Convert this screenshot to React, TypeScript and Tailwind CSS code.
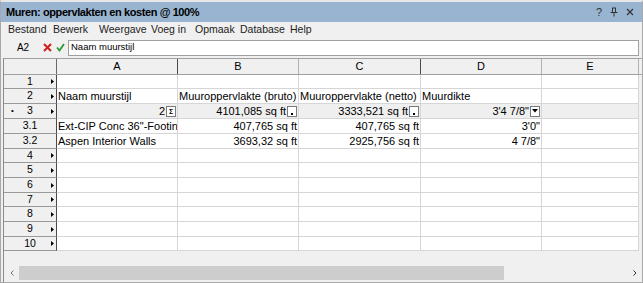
import React from 'react';

type Cell = { text?: string; align?: 'left' | 'right'; box?: 'sum' | 'dot' | 'drop' };
type Row = { label: string; h: number; arrow?: boolean; mark?: boolean; sub?: boolean; cells: Cell[] };

const cols = [
    { key: 'A', w: 121 },
    { key: 'B', w: 121 },
    { key: 'C', w: 122 },
    { key: 'D', w: 121 },
    { key: 'E', w: 97 },
];

const rows: Row[] = [
    { label: '1', h: 14, arrow: true, cells: [] },
    {
        label: '2', h: 15, arrow: true,
        cells: [
            { text: 'Naam muurstijl' },
            { text: 'Muuroppervlakte (bruto)' },
            { text: 'Muuroppervlakte (netto)' },
            { text: 'Muurdikte' },
        ],
    },
    {
        label: '3', h: 15, arrow: true, mark: true, sub: true,
        cells: [
            { text: '2', align: 'right', box: 'sum' },
            { text: '4101,085 sq ft', align: 'right', box: 'dot' },
            { text: '3333,521 sq ft', align: 'right', box: 'dot' },
            { text: "3'4 7/8\"", align: 'right', box: 'drop' },
        ],
    },
    {
        label: '3.1', h: 15,
        cells: [
            { text: 'Ext-CIP Conc 36"-Footin' },
            { text: '407,765 sq ft', align: 'right' },
            { text: '407,765 sq ft', align: 'right' },
            { text: "3'0\"", align: 'right' },
        ],
    },
    {
        label: '3.2', h: 15,
        cells: [
            { text: 'Aspen Interior Walls' },
            { text: '3693,32 sq ft', align: 'right' },
            { text: '2925,756 sq ft', align: 'right' },
            { text: '4 7/8"', align: 'right' },
        ],
    },
    { label: '4', h: 14, arrow: true, cells: [] },
    { label: '5', h: 15, arrow: true, cells: [] },
    { label: '6', h: 15, arrow: true, cells: [] },
    { label: '7', h: 14, arrow: true, cells: [] },
    { label: '8', h: 15, arrow: true, cells: [] },
    { label: '9', h: 15, arrow: true, cells: [] },
    { label: '10', h: 14, arrow: true, cells: [] },
];

// menu item + the slot it takes in the bar
const menu: [string, string][] = [
    ['Bestand', 'w-[45px]'],
    ['Bewerk', 'w-[46px]'],
    ['Weergave', 'w-[52px]'],
    ['Voeg in', 'w-[44px]'],
    ['Opmaak', 'w-[45px]'],
    ['Database', 'w-[50px]'],
    ['Help', 'w-[30px]'],
];

const CellBox: React.FC<{ kind: 'sum' | 'dot' | 'drop' }> = ({ kind }) => (
    <span className="ml-[1px] w-[10px] h-[11px] flex-shrink-0 bg-white border border-[#7a7a7a] flex items-center justify-center">
        {kind === 'sum' && <span className="text-[7px] leading-none font-bold">Σ</span>}
        {kind === 'dot' && <span className="mt-[5px] w-[2px] h-[2px] bg-black" />}
        {kind === 'drop' && (
            <svg width="6" height="4" viewBox="0 0 6 4"><path d="M0 0h6L3 3.5z" fill="#000" /></svg>
        )}
    </span>
);

export default function App() {
    return (
        <div
            className="w-[643px] h-[283px] overflow-hidden bg-[#f0f0f0] border border-[#a8a8a8] border-t-[2px] border-t-[#e6e6e6] flex flex-col text-black"
            style={{ fontFamily: '"Liberation Sans", Arial, sans-serif' }}
        >
            {/* title */}
            <div className="h-[20px] flex-shrink-0 bg-[#99b4d1] flex items-center justify-between pl-[5px] pr-[8px]">
                <span className="text-[11px] font-bold tracking-[-0.4px]">Muren: oppervlakten en kosten @ 100%</span>
                <div className="flex items-center gap-[8px] text-[11px] text-[#333]">
                    <span>?</span>
                    <svg width="8" height="10" viewBox="0 0 8 10"><path d="M2 1h4M2.5 1v4M5.5 1v4M0.5 5.5h7M4 5.5v4" stroke="#333" strokeWidth="1" fill="none" /></svg>
                    <svg width="8" height="8" viewBox="0 0 8 8"><path d="M1 1l6 6M7 1L1 7" stroke="#333" strokeWidth="1.2" /></svg>
                </div>
            </div>

            {/* menu */}
            <div className="h-[16px] flex-shrink-0 flex items-center text-[10.5px] pl-[7px]">
                {menu.map(([m, w]) => (
                    <span key={m} className={`${w} flex-shrink-0 whitespace-nowrap text-[#222]`}>{m}</span>
                ))}
            </div>

            {/* formula bar */}
            <div className="h-[19px] flex-shrink-0 flex items-center pr-[3px]">
                <span className="w-[41px] text-center text-[10px] pl-[3px]">A2</span>
                <svg className="ml-[1px]" width="9" height="9" viewBox="0 0 9 9"><path d="M1 1l7 7M8 1L1 8" stroke="#d0201b" strokeWidth="2" /></svg>
                <svg className="ml-[4px]" width="9" height="9" viewBox="0 0 9 9"><path d="M1 4.5l2.5 3L8 1" stroke="#2f9a2f" strokeWidth="1.8" fill="none" /></svg>
                <div className="ml-[3px] flex-1 h-[16px] bg-white border border-[#a0a0a0] flex items-center pl-[2px] text-[9.5px]">
                    Naam muurstijl
                </div>
            </div>

            {/* grid */}
            <div className="mt-[1px] ml-[2px] flex-1 flex flex-col border-l border-[#8a8a8a] min-h-0">
                <div className="flex h-[17px] border-t border-b border-[#a0a0a0] bg-[#f0f0f0] text-[11px]">
                    <div className="w-[53px] flex-shrink-0 border-r border-[#6a6a6a]" />
                    {cols.map((c, i) => (
                        <div
                            key={c.key}
                            className={`flex-shrink-0 flex items-center justify-center border-r ${i === 0 || i === 2 ? 'border-[#4a4a4a]' : 'border-[#b0b0b0]'}`}
                            style={{ width: c.w }}
                        >
                            {c.key}
                        </div>
                    ))}
                </div>
                {rows.map((r) => (
                    <div key={r.label} className="flex text-[10.5px]" style={{ height: r.h }}>
                        <div className="w-[53px] flex-shrink-0 relative flex items-center justify-center bg-[#f0f0f0] border-b border-r border-[#9a9a9a] border-r-[#4a4a4a]">
                            {r.mark && <span className="absolute left-[7px] text-[8px] leading-none">•</span>}
                            <span className="w-[44px] text-center">{r.label}</span>
                            {r.arrow && (
                                <svg className="absolute right-[2px]" width="3" height="5" viewBox="0 0 3 5"><path d="M0 0l3 2.5L0 5z" fill="#000" /></svg>
                            )}
                        </div>
                        {cols.map((c, i) => {
                            const cell = r.cells[i] || {};
                            return (
                                <div
                                    key={c.key}
                                    className={`flex-shrink-0 flex items-center overflow-hidden whitespace-nowrap border-b border-r border-[#d6d6d6] ${r.sub ? 'bg-[#efefef]' : 'bg-white'} ${cell.align === 'right' ? 'justify-end pr-[1px]' : 'pl-[1px]'}`}
                                    style={{ width: c.w }}
                                >
                                    {cell.text && <span className="text-[11px]">{cell.text}</span>}
                                    {cell.box && <CellBox kind={cell.box} />}
                                </div>
                            );
                        })}
                    </div>
                ))}
                <div className="flex-1" />
                {/* horizontal scrollbar */}
                <div className="h-[14px] flex-shrink-0 flex items-center mb-[2px]">
                    <span className="w-[15px] flex items-center justify-center">
                        <svg width="4" height="6" viewBox="0 0 4 6"><path d="M3.5 0.5L1 3l2.5 2.5" stroke="#777" fill="none" /></svg>
                    </span>
                    <div className="w-[485px] h-[14px] bg-[#cdcdcd]" />
                    <div className="flex-1" />
                    <span className="w-[15px] flex items-center justify-center">
                        <svg width="4" height="6" viewBox="0 0 4 6"><path d="M0.5 0.5L3 3L0.5 5.5" stroke="#333" fill="none" /></svg>
                    </span>
                </div>
            </div>
        </div>
    );
}
